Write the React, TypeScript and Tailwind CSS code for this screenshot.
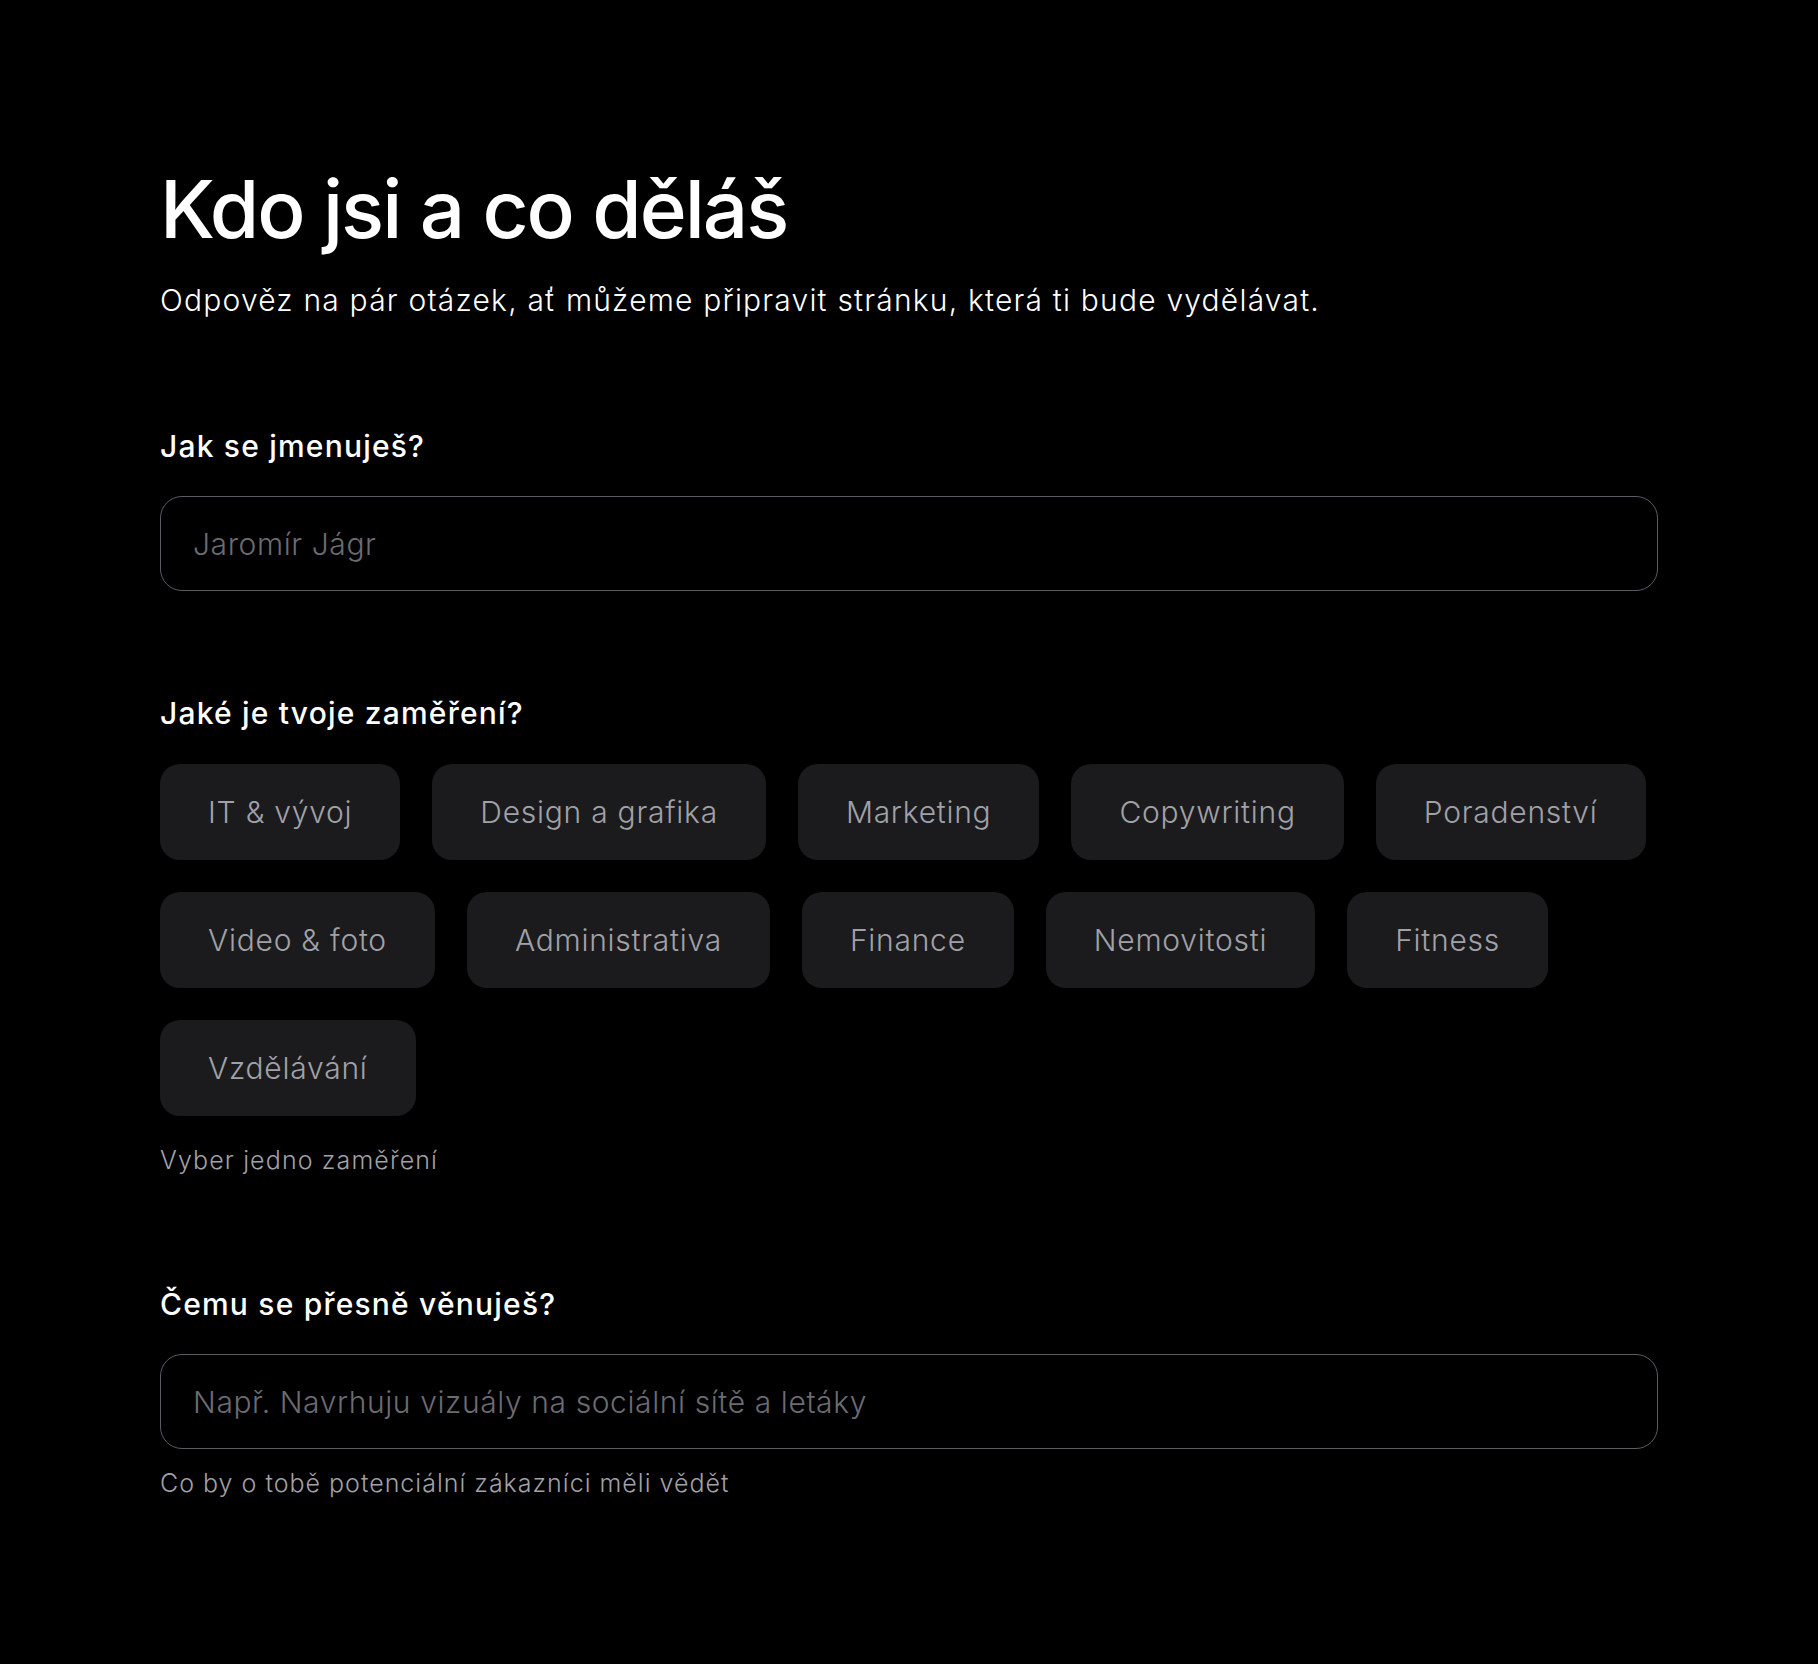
import { useState } from "react"

const focusAreas = [
  "IT & vývoj",
  "Design a grafika",
  "Marketing",
  "Copywriting",
  "Poradenství",
  "Video & foto",
  "Administrativa",
  "Finance",
  "Nemovitosti",
  "Fitness",
  "Vzdělávání",
]

function FieldLabel({ children }: { children: React.ReactNode }) {
  return (
    <label className="block text-[30px] leading-[40px] font-medium tracking-[0.04em] text-white">
      {children}
    </label>
  )
}

function TextField({ placeholder }: { placeholder: string }) {
  return (
    <input
      type="text"
      placeholder={placeholder}
      className="mt-[30px] h-[95px] w-full rounded-[22px] border-[1.5px] border-[#5c5c63] bg-black px-[32px] text-[30px] font-light tracking-[0.02em] text-white outline-none placeholder:text-[#6b6b72]"
    />
  )
}

export default function App() {
  const [selected, setSelected] = useState<string | null>(null)

  return (
    <div className="min-h-screen bg-black font-[Inter,sans-serif] text-white">
      <div className="px-[160px] pt-[169px] pb-[160px]">
        {/* Header */}
        <h1 className="text-[80px] leading-[80px] font-medium tracking-[-0.025em]">
          Kdo jsi a co děláš
        </h1>
        <p className="mt-[31px] text-[30px] leading-[40px] font-light tracking-[0.04em] text-white">
          Odpověz na pár otázek, ať můžeme připravit stránku, která ti bude vydělávat.
        </p>

        {/* Name */}
        <div className="mt-[106px]">
          <FieldLabel>Jak se jmenuješ?</FieldLabel>
          <TextField placeholder="Jaromír Jágr" />
        </div>

        {/* Focus */}
        <div className="mt-[102px]">
          <FieldLabel>Jaké je tvoje zaměření?</FieldLabel>
          <div className="mt-[31px] flex flex-wrap gap-[32px]">
            {focusAreas.map((area) => (
              <button
                key={area}
                type="button"
                onClick={() => setSelected(area)}
                className={
                  selected === area
                    ? "h-[96px] rounded-[20px] bg-white px-[48px] text-[30px] font-light tracking-[0.025em] text-black"
                    : "h-[96px] rounded-[20px] bg-[#1b1b1d] px-[48px] text-[30px] font-light tracking-[0.025em] text-[#a1a1a8]"
                }
              >
                {area}
              </button>
            ))}
          </div>
          <p className="mt-[26px] text-[25px] leading-[36px] font-light tracking-[0.045em] text-[#a1a1a8]">
            Vyber jedno zaměření
          </p>
        </div>

        {/* Detail */}
        <div className="mt-[106px]">
          <FieldLabel>Čemu se přesně věnuješ?</FieldLabel>
          <TextField placeholder="Např. Navrhuju vizuály na sociální sítě a letáky" />
          <p className="mt-[16px] text-[25px] leading-[36px] font-light tracking-[0.04em] text-[#a1a1a8]">
            Co by o tobě potenciální zákazníci měli vědět
          </p>
        </div>
      </div>
    </div>
  )
}
